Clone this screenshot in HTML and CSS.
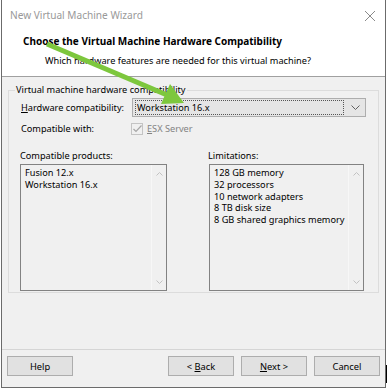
FILE: index.html
```html
<!DOCTYPE html>
<html lang="en">
<head>
    <meta charset="UTF-8">
    <title>New Virtual Machine Wizard</title>
    <link rel="stylesheet" href="styles.css">
</head>
<body>
    <div class="window">
        <!-- Header -->
        <div class="header">
            <div class="titlebar">
                <span class="title">New Virtual Machine Wizard</span>
                <svg class="close" width="12" height="12" viewBox="0 0 12 12">
                    <path d="M1 1 L11 11 M11 1 L1 11" stroke="#8a8a8a" stroke-width="1" fill="none"/>
                </svg>
            </div>
            <div class="heading">Choose the Virtual Machine Hardware Compatibility</div>
            <div class="subheading">Which hardware features are needed for this virtual machine?</div>
        </div>

        <!-- Body -->
        <div class="content">
            <fieldset class="group">
                <legend>Virtual machine hardware compatibility</legend>

                <div class="row">
                    <span class="label"><u>H</u>ardware compatibility:</span>
                    <div class="combo">
                        <span class="combo-value">Workstation 16.x</span>
                        <svg class="chevron" width="9" height="5" viewBox="0 0 9 5">
                            <path d="M0.5 0.5 L4.5 4.5 L8.5 0.5" stroke="#606060" fill="none"/>
                        </svg>
                    </div>
                </div>

                <div class="row">
                    <span class="label">Compatible with:</span>
                    <span class="check">
                        <svg width="9" height="8" viewBox="0 0 9 8">
                            <path d="M0.5 4 L3 6.5 L8.5 0.5" stroke="#a6a6a6" stroke-width="1.2" fill="none"/>
                        </svg>
                    </span>
                    <span class="disabled"><u>E</u>SX Server</span>
                </div>

                <div class="lists">
                    <div class="list-col">
                        <div class="list-label">Compatible products:</div>
                        <div class="listbox">
                            <div class="items">
                                <div>Fusion 12.x</div>
                                <div>Workstation 16.x</div>
                            </div>
                            <div class="scroll">
                                <svg width="7" height="4" viewBox="0 0 7 4"><path d="M0.5 3.5 L3.5 0.5 L6.5 3.5" stroke="#c2c2c2" fill="none"/></svg>
                                <svg width="7" height="4" viewBox="0 0 7 4"><path d="M0.5 0.5 L3.5 3.5 L6.5 0.5" stroke="#c2c2c2" fill="none"/></svg>
                            </div>
                        </div>
                    </div>
                    <div class="list-col wide">
                        <div class="list-label">Limitations:</div>
                        <div class="listbox">
                            <div class="items">
                                <div>128 GB memory</div>
                                <div>32 processors</div>
                                <div>10 network adapters</div>
                                <div>8 TB disk size</div>
                                <div>8 GB shared graphics memory</div>
                            </div>
                            <div class="scroll">
                                <svg width="7" height="4" viewBox="0 0 7 4"><path d="M0.5 3.5 L3.5 0.5 L6.5 3.5" stroke="#c2c2c2" fill="none"/></svg>
                                <svg width="7" height="4" viewBox="0 0 7 4"><path d="M0.5 0.5 L3.5 3.5 L6.5 0.5" stroke="#c2c2c2" fill="none"/></svg>
                            </div>
                        </div>
                    </div>
                </div>
            </fieldset>
        </div>

        <!-- Footer buttons -->
        <div class="footer">
            <button class="btn">Help</button>
            <span class="spacer"></span>
            <button class="btn">&lt; <u>B</u>ack</button>
            <button class="btn"><u>N</u>ext &gt;</button>
            <button class="btn">Cancel</button>
        </div>

        <!-- Green annotation arrow -->
        <svg class="arrow" width="387" height="389" viewBox="0 0 387 389">
            <line x1="47" y1="44" x2="167" y2="95" stroke="#7dc73d" stroke-width="5"/>
            <polygon points="184,103 161,104 170,84" fill="#7dc73d"/>
        </svg>
    </div>
</body>
</html>
```

FILE: styles.css
```css
/* Basic Styling */
body {
    margin: 0;
    font-family: "Noto Sans", Arial, sans-serif;
    font-size: 9.2px;
    color: #000;
    background-color: #fff;
}

.window {
    position: relative;
    margin-left: 1px;
    width: 383px;
    height: 387px;
    border: 1px solid #6b6b6b;
    border-top: none;
    background-color: #f0f0f0;
    display: flex;
    flex-direction: column;
    white-space: nowrap;
}

.window::after {
    content: "";
    position: absolute;
    right: -3px;
    top: 365px;
    width: 2px;
    height: 18px;
    background-color: #000;
}

/* Header */
.header {
    background-color: #fff;
    height: 76px;
    border-bottom: 1px solid #a0a0a0;
}

.titlebar {
    height: 30px;
    display: flex;
    align-items: center;
    padding-left: 8px;
    padding-right: 8px;
}

.title {
    flex: 1;
    color: #999;
    font-size: 10.1px;
}

.close {
    margin-right: 1px;
    margin-top: 1px;
}

.heading {
    font-weight: bold;
    font-size: 10px;
    padding-left: 21px;
    line-height: 14px;
    margin-top: 4px;
}

.subheading {
    padding-left: 43px;
    line-height: 14px;
    margin-top: 6px;
}

/* Group box */
.content {
    flex: 1;
    padding: 7px 6px 0 6px;
}

.group {
    margin: 0;
    padding: 0 12px 0 12px;
    height: 207px;
    border: 1px solid #dcdcdc;
}

.group legend {
    margin-left: -6px;
    padding: 0 1px;
    line-height: 12px;
}

.row {
    display: flex;
    align-items: center;
    height: 21px;
}

.row:first-of-type {
    margin-top: 1px;
}

.label {
    width: 111px;
}

.combo {
    flex: 1;
    height: 17px;
    border: 1px solid #adadad;
    background-color: #e5e5e5;
    display: flex;
    align-items: center;
    padding: 0 3px;
}

.combo-value {
    width: 206px;
    height: 13px;
    line-height: 13px;
    padding-left: 1px;
    outline: 1px dotted #555;
}

.chevron {
    margin-left: 8px;
}

.check {
    width: 10px;
    height: 10px;
    border: 1px solid #c4c4c4;
    background-color: #f0f0f0;
    margin-left: -1px;
    margin-right: 4px;
    display: flex;
    align-items: center;
    justify-content: center;
}

.disabled {
    color: #838383;
}

/* Lists */
.lists {
    display: grid;
    grid-template-columns: 147px 155px;
    column-gap: 42px;
    margin-top: 11px;
    margin-left: -1px;
}

.list-label {
    line-height: 12px;
    margin-bottom: 2px;
}

.wide .list-label {
    margin-left: -1px;
}

.listbox {
    height: 125px;
    border: 1px solid #828282;
    display: flex;
}

.items {
    flex: 1;
    padding: 2px 4px;
    line-height: 11.8px;
}

.scroll {
    width: 14px;
    display: flex;
    flex-direction: column;
    justify-content: space-between;
    align-items: center;
    padding: 7px 0 6px;
    border-left: 1px solid #f7f7f7;
}

/* Footer */
.footer {
    height: 31px;
    border-top: 1px solid #d5d5d5;
    display: flex;
    align-items: flex-start;
    padding: 6px 5px 0 5px;
    gap: 7px;
}

.spacer {
    flex: 1;
}

.btn {
    width: 66px;
    height: 20px;
    border: 1px solid #adadad;
    background-color: #e1e1e1;
    font-family: "Noto Sans", Arial, sans-serif;
    font-size: 9.3px;
    padding: 0;
    color: #000;
}

.arrow {
    position: absolute;
    left: -2px;
    top: 0;
    pointer-events: none;
}
```
